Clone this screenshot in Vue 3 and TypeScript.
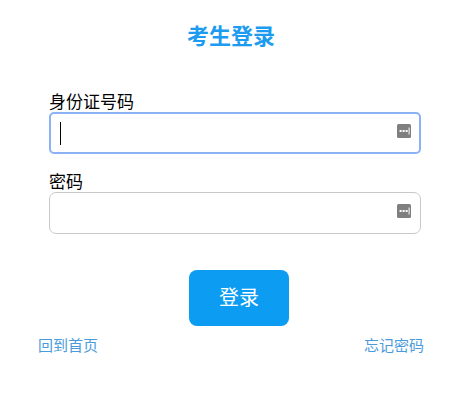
<script setup lang="ts">
import { ref } from 'vue'

const idNumber = ref('')
const password = ref('')
</script>

<template>
  <div class="login">
    <h1 class="login__title">考生登录</h1>
    <form class="login__form" @submit.prevent>
      <label class="field">
        <span class="field__label">身份证号码</span>
        <span class="field__box field__box--active">
          <input v-model="idNumber" class="field__input" type="text" />
          <i class="field__caret"></i>
          <svg class="field__icon" viewBox="0 0 14 14" aria-hidden="true">
            <rect width="14" height="14" rx="1.5" fill="#7f7f7f" />
            <rect x="2.6" y="6" width="2" height="2" fill="#fff" />
            <rect x="5.6" y="6" width="2" height="2" fill="#fff" />
            <rect x="8.6" y="6" width="2" height="2" fill="#fff" />
            <rect x="11.6" y="3.5" width="1" height="7" fill="#fff" />
          </svg>
        </span>
      </label>
      <label class="field">
        <span class="field__label">密码</span>
        <span class="field__box">
          <input v-model="password" class="field__input" type="password" />
          <svg class="field__icon" viewBox="0 0 14 14" aria-hidden="true">
            <rect width="14" height="14" rx="1.5" fill="#7f7f7f" />
            <rect x="2.6" y="6" width="2" height="2" fill="#fff" />
            <rect x="5.6" y="6" width="2" height="2" fill="#fff" />
            <rect x="8.6" y="6" width="2" height="2" fill="#fff" />
            <rect x="11.6" y="3.5" width="1" height="7" fill="#fff" />
          </svg>
        </span>
      </label>
      <button class="login__submit" type="submit">登录</button>
    </form>
    <div class="login__links">
      <a class="login__link">回到首页</a>
      <a class="login__link">忘记密码</a>
    </div>
  </div>
</template>

<style>
body {
  background: #fff;
}
</style>

<style scoped>
.login {
  box-sizing: border-box;
  width: 455px;
  height: 404px;
  padding-top: 19px;
  font-family: "Noto Sans CJK SC", "Liberation Sans", sans-serif;
  color: #000;
}

.login__title {
  margin: 0 0 0 187px;
  width: 88px;
  font-size: 22px;
  line-height: 30px;
  font-weight: 700;
  color: #1d9bf0;
}

.login__form {
  display: flex;
  flex-direction: column;
  margin: 43px 34px 0 49px;
}

.field {
  display: flex;
  flex-direction: column;
  margin-bottom: 18px;
}

.field__label {
  font-size: 17px;
  line-height: 18px;
  height: 20px;
}

.field__box {
  position: relative;
  display: flex;
  align-items: center;
  box-sizing: border-box;
  height: 42px;
  padding: 0 9px 4px 10px;
  border: 1px solid #c9c9c9;
  border-radius: 7px;
}

.field__box--active {
  border: 2px solid #8ab2f5;
  border-radius: 5px;
  padding: 0 8px 4px 9px;
}

.field__input {
  flex: 1;
  min-width: 0;
  border: 0;
  outline: 0;
  padding: 0;
  background: transparent;
  font-size: 16px;
  caret-color: transparent;
}

.field__caret {
  position: absolute;
  left: 9px;
  top: 8px;
  width: 1px;
  height: 23px;
  background: #000;
}

.field__icon {
  flex: none;
  width: 14px;
  height: 14px;
}

.login__submit {
  align-self: flex-start;
  width: 100px;
  height: 56px;
  margin: 18px 0 0 140px;
  padding: 0 0 3px;
  border: 0;
  border-radius: 8px;
  background: #0c9cf2;
  color: #fff;
  font-family: inherit;
  font-size: 20px;
  cursor: pointer;
}

.login__links {
  display: flex;
  justify-content: space-between;
  margin: 8px 31px 0 38px;
}

.login__link {
  font-size: 15px;
  line-height: 22px;
  color: #4a9bdc;
  cursor: pointer;
}
</style>
